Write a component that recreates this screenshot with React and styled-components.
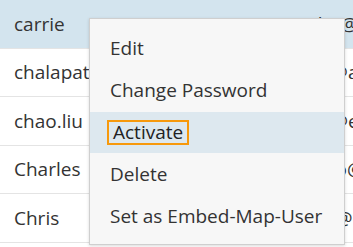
import React from "react";
import styled, { createGlobalStyle } from "styled-components";

const Global = createGlobalStyle`
  html, body { margin: 0; padding: 0; background: #fff; }
  body { font-family: "Open Sans", "Noto Sans", sans-serif; color: #333; overflow: hidden; }
`;

const Page = styled.div`
  position: relative;
  width: 353px;
  height: 247px;
  overflow: hidden;
`;

const Table = styled.div`
  display: flex;
  flex-direction: column;
  width: 560px;
`;

const Row = styled.div`
  display: grid;
  grid-template-columns: 262px 1fr;
  align-items: center;
  height: 48.5px;
  box-sizing: border-box;
  border-bottom: 1px solid #e4e4e4;
  background: ${(p) => (p.$selected ? "#d3e4ee" : "#fff")};
  font-size: 19px;
  white-space: nowrap;
`;

const Cell = styled.div`
  padding-left: ${(p) => p.$pad ?? 14}px;
  overflow: hidden;
`;

const Menu = styled.ul`
  position: absolute;
  left: 89px;
  top: 18px;
  width: 256px;
  height: 227px;
  box-sizing: border-box;
  margin: 0;
  padding: 9px 0 7px;
  list-style: none;
  background: #f7f7f7;
  border: 1px solid #cfcfcf;
  box-shadow: 0 1px 3px rgba(0, 0, 0, 0.15);
  display: flex;
  flex-direction: column;
`;

const Item = styled.li`
  height: 42px;
  display: flex;
  align-items: center;
  padding-left: 20px;
  font-size: 19px;
  color: #333;
  background: ${(p) => (p.$active ? "#dde8ef" : "transparent")};
`;

const Label = styled.span`
  display: inline-block;
  line-height: 21px;
  margin-left: ${(p) => (p.$focus ? "-3px" : "0")};
  padding: 0 ${(p) => (p.$focus ? "4px" : "0")};
  border: ${(p) => (p.$focus ? "2px solid #f7990c" : "none")};
  color: ${(p) => (p.$focus ? "#222" : "#333")};
`;

const rows = [
  ["carrie", "carrie.ho@esri.com"],
  ["chalapathi", "chalapa@arcgis.com"],
  ["chao.liu", "chao.liu@esri.com"],
  ["Charles", "charlesko@esri.com"],
  ["Chris", "chris.lee@esri.com"],
];

const items = ["Edit", "Change Password", "Activate", "Delete", "Set as Embed-Map-User"];

export default function App() {
  return (
    <Page>
      <Global />
      <Table>
        {rows.map(([n, e], i) => (
          <Row key={n} $selected={i === 0}>
            <Cell>{n}</Cell>
            <Cell $pad={0}>{e}</Cell>
          </Row>
        ))}
      </Table>
      <Menu>
        {items.map((t) => (
          <Item key={t} $active={t === "Activate"}>
            <Label $focus={t === "Activate"}>{t}</Label>
          </Item>
        ))}
      </Menu>
    </Page>
  );
}
